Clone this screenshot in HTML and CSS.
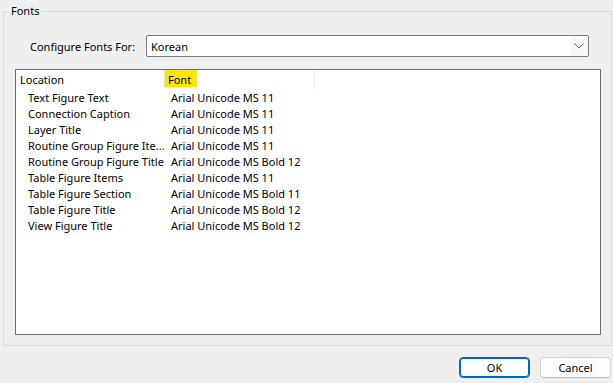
FILE: index.html
```html
<!DOCTYPE html>
<html>
<head>
<meta charset="utf-8">
<link rel="stylesheet" href="styles.css">
</head>
<body>
<div class="dialog">
  <fieldset class="group">
    <legend class="group-title">Fonts</legend>
    <div class="config-row">
      <span class="config-label">Configure Fonts For:</span>
      <div class="combo">
        <span class="combo-value">Korean</span>
        <span class="combo-button">
          <svg width="10" height="6" viewBox="0 0 10 6"><path d="M0.5 0.5 L5 5 L9.5 0.5" fill="none" stroke="#5f5f5f" stroke-width="1"/></svg>
        </span>
      </div>
    </div>
    <div class="listbox">
      <div class="list-header">
        <div class="hcell col-loc">Location</div>
        <div class="hcell col-font"><span class="hl">Font</span></div>
        <div class="hcell col-rest"></div>
      </div>
      <div class="list-body">
        <div class="row"><span class="c1">Text Figure Text</span><span class="c2">Arial Unicode MS 11</span></div>
        <div class="row"><span class="c1">Connection Caption</span><span class="c2">Arial Unicode MS 11</span></div>
        <div class="row"><span class="c1">Layer Title</span><span class="c2">Arial Unicode MS 11</span></div>
        <div class="row"><span class="c1">Routine Group Figure Ite...</span><span class="c2">Arial Unicode MS 11</span></div>
        <div class="row"><span class="c1">Routine Group Figure Title</span><span class="c2">Arial Unicode MS Bold 12</span></div>
        <div class="row"><span class="c1">Table Figure Items</span><span class="c2">Arial Unicode MS 11</span></div>
        <div class="row"><span class="c1">Table Figure Section</span><span class="c2">Arial Unicode MS Bold 11</span></div>
        <div class="row"><span class="c1">Table Figure Title</span><span class="c2">Arial Unicode MS Bold 12</span></div>
        <div class="row"><span class="c1">View Figure Title</span><span class="c2">Arial Unicode MS Bold 12</span></div>
      </div>
    </div>
  </fieldset>
  <div class="buttons">
    <button class="btn btn-default">OK</button>
    <button class="btn">Cancel</button>
  </div>
</div>
</body>
</html>
```
FILE: styles.css
```css
* { box-sizing: border-box; }
html, body {
  margin: 0;
  padding: 0;
  background: #efefef;
  width: 613px;
  height: 383px;
  overflow: hidden;
}
body {
  font-family: "Noto Sans", "Liberation Sans", sans-serif;
  font-size: 11px;
  color: #000;
}
.dialog {
  padding: 3px 2px 0 3px;
}
.group {
  margin: 0;
  width: 609px;
  border: 1px solid #d9d9d9;
  padding: 0 10px 10px 11px;
}
.group-title {
  margin-left: -6px;
  padding: 0 2px;
  line-height: 16px;
  height: 16px;
}
.config-row {
  display: flex;
  align-items: center;
  margin-top: 16px;
  height: 22px;
}
.config-label {
  width: 131px;
  padding-left: 15px;
  flex: none;
}
.combo {
  width: 443px;
  height: 22px;
  border: 1px solid #7a7a7a;
  border-radius: 2px;
  background: #fff;
  display: flex;
  align-items: center;
}
.combo-value {
  flex: 1;
  padding-left: 4px;
}
.combo-button {
  width: 18px;
  height: 20px;
  background: #f7f7f7;
  display: flex;
  align-items: center;
  justify-content: center;
}
.listbox {
  margin-top: 12px;
  width: 586px;
  height: 266px;
  border: 1px solid #6e6e6e;
  background: #fff;
}
.list-header {
  display: flex;
  height: 19px;
}
.hcell {
  height: 19px;
  display: flex;
  align-items: flex-start;
}
.col-loc {
  width: 149px;
  padding-left: 4px;
  padding-top: 2px;
  line-height: 16px;
  border-right: 1px solid #e5e5e5;
}
.col-font {
  width: 150px;
  border-right: 1px solid #e5e5e5;
}
.hl {
  display: block;
  background: #ffe600;
  width: 32px;
  height: 17px;
  padding: 2px 0 0 3px;
  line-height: 16px;
}
.list-body {
  padding-top: 1px;
}
.row {
  display: flex;
  height: 16px;
  line-height: 16px;
  white-space: nowrap;
}
.c1 {
  width: 150px;
  padding-left: 12px;
}
.c2 {
  padding-left: 5px;
}
.buttons {
  display: flex;
  justify-content: flex-end;
  gap: 10px;
  margin-top: 11px;
  padding-right: 0;
}
.btn {
  width: 71px;
  height: 21px;
  font-family: inherit;
  font-size: 11px;
  color: #000;
  background: #fdfdfd;
  border: 1px solid #d0d0d0;
  border-bottom-color: #b8b8b8;
  border-radius: 4px;
  padding: 0;
}
.btn-default {
  border: 1px solid #0067c0;
  box-shadow: inset 0 0 0 1px #0067c0;
  background: #fdfdfd;
}
```
